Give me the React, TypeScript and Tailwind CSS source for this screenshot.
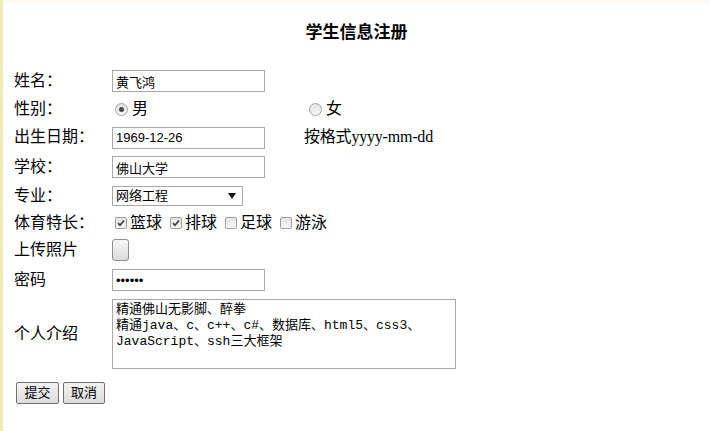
import React from "react";

const cjk = "font-['Liberation_Serif','Noto_Sans_CJK_SC',serif]";
const ctl = "font-['Liberation_Sans','Noto_Sans_CJK_SC',sans-serif]";

function Radio({ checked }: { checked?: boolean }) {
  return (
    <span className="flex h-[13px] w-[13px] items-center justify-center rounded-full border border-[#a3a3a3] bg-gradient-to-b from-[#e2e2e2] to-[#f7f7f7]">
      {checked && <span className="h-[5px] w-[5px] rounded-full bg-[#4a4a4a]" />}
    </span>
  );
}

function Check({ checked }: { checked?: boolean }) {
  return (
    <span className="flex h-[12px] w-[12px] items-center justify-center rounded-[2px] border border-[#a0a0a0] bg-gradient-to-b from-[#e4e4e4] to-[#f6f6f6]">
      {checked && (
        <svg width="8" height="8" viewBox="0 0 8 8">
          <path d="M1 4.2 L3 6.3 L7 1.5" fill="none" stroke="#3c3c3c" strokeWidth="1.7" />
        </svg>
      )}
    </span>
  );
}

function Row({ label, h, children }: { label: string; h: string; children?: React.ReactNode }) {
  return (
    <div className={`flex items-center ${h}`}>
      <div className="w-[98px] shrink-0 text-[16px] leading-[18px]">{label}</div>
      {children}
    </div>
  );
}

const inputCls = `h-[22px] w-[153px] border border-[#a9a9a9] bg-white px-[3px] text-[13px] text-black outline-none ${ctl}`;

export default function App() {
  const sports = [
    { name: "篮球", checked: true },
    { name: "排球", checked: true },
    { name: "足球", checked: false },
    { name: "游泳", checked: false },
  ];

  return (
    <div className={`min-h-[431px] border-l-[3px] border-[#efeab8] bg-white text-black ${cjk}`}>
      <div className="h-[3px] bg-[#fdf9ee]" />
      <h3 className="flex h-[62px] items-center justify-center pb-[2px] text-[17px] font-bold">学生信息注册</h3>

      <div className="pl-[11px]">
        <Row label="姓名：" h="h-[32px]">
          <input className={inputCls} defaultValue="黄飞鸿" />
        </Row>

        <Row label="性别：" h="h-[24px]">
          <div className="flex w-[192px] items-center">
            <span className="ml-[3px] mr-[4px]">
              <Radio checked />
            </span>
            <span className="text-[16px]">男</span>
          </div>
          <div className="flex items-center">
            <span className="ml-[5px] mr-[4px]">
              <Radio />
            </span>
            <span className="text-[16px]">女</span>
          </div>
        </Row>

        <Row label="出生日期：" h="h-[32px]">
          <div className="w-[192px]">
            <input className={inputCls} defaultValue="1969-12-26" />
          </div>
          <span className="text-[16px] tracking-[-0.2px]">按格式yyyy-mm-dd</span>
        </Row>

        <Row label="学校：" h="h-[28px]">
          <input className={inputCls} defaultValue="佛山大学" />
        </Row>

        <Row label="专业：" h="h-[29px]">
          <div className={`flex h-[20px] w-[131px] items-center justify-between border border-[#a9a9a9] bg-white pl-[3px] pr-[6px] text-[13px] ${ctl}`}>
            <span>网络工程</span>
            <svg width="8" height="6" viewBox="0 0 8 6">
              <path d="M0 0 L8 0 L4 6 Z" fill="#111" />
            </svg>
          </div>
        </Row>

        <Row label="体育特长：" h="h-[25px]">
          <div className="flex items-center">
            {sports.map((s) => (
              <label key={s.name} className="mr-[5px] flex items-center">
                <span className="ml-[3px] mr-[3px]">
                  <Check checked={s.checked} />
                </span>
                <span className="text-[16px]">{s.name}</span>
              </label>
            ))}
          </div>
        </Row>

        <Row label="上传照片" h="h-[30px]">
          <button className="h-[22px] w-[17px] rounded-[3px] border border-[#8e8e8e] bg-gradient-to-b from-[#f7f7f7] to-[#dcdcdc]" />
        </Row>

        <Row label="密码" h="h-[30px]">
          <input type="password" className={inputCls} defaultValue="123456" />
        </Row>

        <Row label="个人介绍" h="h-[77px]">
          <textarea
            className="h-[70px] w-[344px] resize-none border border-[#a9a9a9] bg-white px-[3px] py-[2px] font-['Liberation_Mono','Noto_Sans_CJK_SC',monospace] text-[13px] leading-[16px] text-black outline-none"
            defaultValue={"精通佛山无影脚、醉拳\n精通java、c、c++、c#、数据库、html5、css3、JavaScript、ssh三大框架"}
          />
        </Row>

        <div className={`mt-[10px] flex gap-[4px] pl-[2px] ${ctl}`}>
          <button className="h-[22px] w-[43px] rounded-[2px] border border-[#707070] bg-gradient-to-b from-[#f3f3f3] to-[#dcdcdc] text-[13px]">提交</button>
          <button className="h-[22px] w-[42px] rounded-[2px] border border-[#707070] bg-gradient-to-b from-[#f3f3f3] to-[#dcdcdc] text-[13px]">取消</button>
        </div>
      </div>
    </div>
  );
}
